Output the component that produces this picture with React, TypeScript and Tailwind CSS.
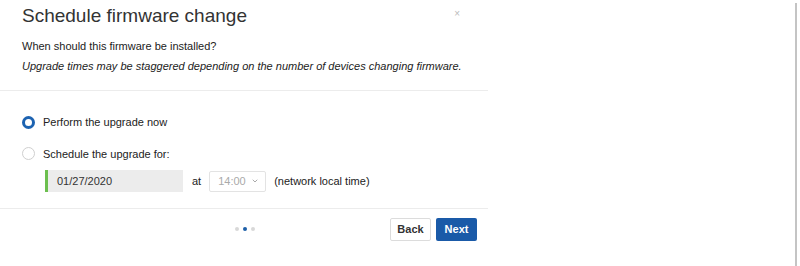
import { ChevronDown } from 'lucide-react'

function Radio({ checked }: { checked?: boolean }) {
  return checked ? (
    <div className="h-[13px] w-[13px] rounded-full border-[3px] border-[#1d63b1] bg-white" />
  ) : (
    <div className="h-[13px] w-[13px] rounded-full border border-[#cfcfcf] bg-white" />
  )
}

export default function App() {
  return (
    <div className="flex h-[266px] w-[800px] bg-white font-['Liberation_Sans',Arial,sans-serif] text-[#222]">
      <div className="flex w-[488px] flex-col">
        <div className="flex items-start justify-between pl-[22px] pr-[28px] pt-[4px]">
          <div className="text-[19px] font-light leading-[24px] text-[#333]">Schedule firmware change</div>
          <div className="pt-[5px] text-[10px] leading-none text-[#bbb]">×</div>
        </div>
        <div className="mt-[11px] pl-[22px] text-[11px] leading-[14px]">When should this firmware be installed?</div>
        <div className="mt-[6px] pl-[22px] text-[11px] italic leading-[14px]">
          Upgrade times may be staggered depending on the number of devices changing firmware.
        </div>
        <div className="mt-[17px] h-px bg-[#ececec]" />
        <div className="flex flex-col pl-[22px] pt-[23px]">
          <label className="flex items-center gap-[8px] text-[11px]">
            <Radio checked />
            <span>Perform the upgrade now</span>
          </label>
          <label className="mt-[15px] flex items-center gap-[8px] text-[11px]">
            <Radio />
            <span>Schedule the upgrade for:</span>
          </label>
          <div className="mt-[8px] flex items-center pl-[23px] text-[11px]">
            <div className="flex h-[22px] w-[138px] items-center border-l-[3px] border-[#6cbf4f] bg-[#ececec] pl-[9px] text-[#333]">
              01/27/2020
            </div>
            <span className="ml-[9px]">at</span>
            <div className="ml-[8px] flex h-[21px] w-[57px] items-center gap-[5px] rounded-[2px] border border-[#e3e3e3] pl-[8px] text-[#aaa]">
              14:00
              <ChevronDown size={8} strokeWidth={3} />
            </div>
            <span className="ml-[8px]">(network local time)</span>
          </div>
        </div>
        <div className="mt-[16px] h-px bg-[#ececec]" />
        <div className="relative flex items-center justify-end pr-[11px] pt-[9px]">
          <div className="absolute left-[235px] top-[18px] flex gap-[4px]">
            <div className="h-[4px] w-[4px] rounded-full bg-[#d8d8d8]" />
            <div className="h-[4px] w-[4px] rounded-full bg-[#1d5fa8]" />
            <div className="h-[4px] w-[4px] rounded-full bg-[#d8d8d8]" />
          </div>
          <button className="h-[23px] w-[41px] rounded-[2px] border border-[#dcdcdc] bg-white text-[11px] font-bold text-[#333]">
            Back
          </button>
          <button className="ml-[5px] h-[23px] w-[41px] rounded-[2px] bg-[#1a5aa8] text-[11px] font-bold text-white">
            Next
          </button>
        </div>
      </div>
      <div className="flex-1" />
      <div className="mr-[3px] mt-[3px] w-[2px] bg-[#c4c4c4]" />
    </div>
  )
}
